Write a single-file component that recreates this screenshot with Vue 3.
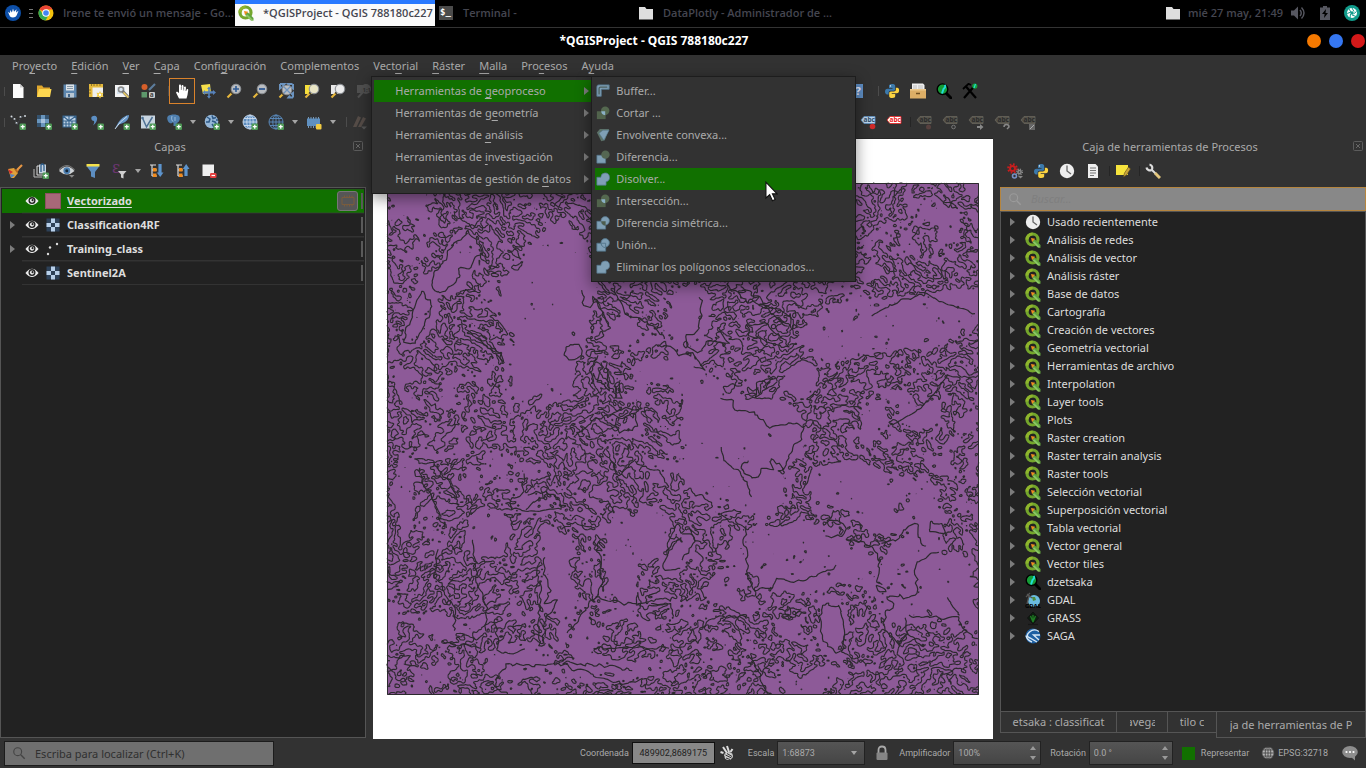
<script setup>
const plus = '<rect x="9.5" y="9.5" width="6.5" height="6.5" rx="1.2" fill="#4f9a57"/><path d="M12.75 10.7v4M10.75 12.7h4" stroke="#fff" stroke-width="1.3"/>'
const lens = (x, y) => `<path d="M${x - 3} ${y + 3}L1.5 14.5" stroke="#e6b73c" stroke-width="2.2"/><path d="M${x - 3} ${y + 3}l-1.6 1.6" stroke="#333" stroke-width="2"/><circle cx="${x}" cy="${y}" r="4.8" fill="#b9bcc0" stroke="#8b8f94"/>`
const tag = (bg, fg, edge) => `<path d="M1 6l3-3.500h11v7H4z" fill="${bg}" stroke="${edge}" stroke-width=".8"/><text x="3.500" y="8.400" font-size="6.500" font-weight="700" font-family="Noto Sans, sans-serif" fill="${fg}">abc</text>`
const python = '<path d="M8 1C5.500 1 5 2 5 3v2h3.500v.8H3.500C1.800 5.800 1 7 1 8.600S1.800 11.500 3.200 11.500H4.600V9.800C4.600 8.600 5.500 7.800 6.600 7.800h3C10.600 7.800 11.200 7 11.200 6V3C11.200 1.600 10 1 8 1z" fill="#3b79ab"/><circle cx="6.500" cy="2.900" r=".7" fill="#fff"/><path d="M8.200 15c2.500 0 3-1 3-2v-2H7.700v-.8h5c1.700 0 2.400-1.200 2.400-2.800S14.500 4.700 13.200 4.700H11.900V6.500C11.900 7.700 11 8.400 9.900 8.400h-3C5.800 8.400 5.200 9.200 5.200 10.200V13c0 1.400 1 2 3 2z" fill="#fbd341"/>'
const folder = '<path d="M1 2h6l1.500 2H15v10.500H1z" fill="#dedede"/>'
const globe = (fill, line) => `<circle cx="8" cy="8" r="7" fill="${fill}"/><g fill="none" stroke="${line}" stroke-width=".9"><circle cx="8" cy="8" r="7"/><ellipse cx="8" cy="8" rx="3.200" ry="7"/><path d="M8 1v14M1 8h14M2 4.500h12M2 11.500h12"/></g>`
const clock = '<circle cx="8" cy="8" r="7.200" fill="#eee"/><path d="M8 2.500V8l4 3" fill="none" stroke="#666" stroke-width="1.300"/>'
const geo = '#7f9fb5'
const edge = '#54768c'
const muted = '#54684f'

const icons = {
  xfce: '<circle cx="8" cy="8" r="8" fill="#0d4fa8"/><path d="M3 7l2 1 .3-3 1.600 2.500L8 3.500l1 3.300 2.500-2.500L11 7.500l2.500-1.700-1.800 4.500C10.500 12.800 7 13 5 11.500z" fill="#fff"/>',
  chrome: '<circle cx="8" cy="8" r="7.500" fill="#f4c20d"/><path d="M8 8L1.500 4.200A7.500 7.500 0 0 1 14.500 4.500H8z" fill="#ea4335"/><path d="M1.500 4.200A7.500 7.500 0 0 0 7.500 15.500L11 9.500 8 8 5 9.500z" fill="#34a853"/><circle cx="8" cy="8" r="3.800" fill="#fff"/><circle cx="8" cy="8" r="2.800" fill="#4285f4"/>',
  qgis: '<circle cx="7.500" cy="7.500" r="5.500" fill="none" stroke="#74a62c" stroke-width="3.200"/><path d="M2 7.500A5.500 5.500 0 0 1 7.500 2" fill="none" stroke="#8fb52c" stroke-width="3.200"/><path d="M7 7l3 .4L15.500 13v2.500H13L7.400 10z" fill="#5fa33b"/><path d="M9.500 9.500l6 6H13L7.400 10z" fill="#8cc665"/><path d="M6 6l4.200.7L7 10z" fill="#f28c1e"/>',
  terminal: '<rect x="1" y="1" width="14" height="14" fill="#4b4b4b"/><text x="2" y="10" font-size="9" font-weight="700" font-family="DejaVu Sans Mono, monospace" fill="#fff">$_</text>',
  folder,
  speaker: '<path d="M1 5.500h3L8 1.500v13L4 10.500H1z" fill="#565760"/><path d="M10 5q2.500 3 0 6M11.500 2.500q5 5.500 0 11" fill="none" stroke="#565760" stroke-width="1.400"/>',
  battery: '<path d="M3 2.500h3V1h4v1.500h3V15H3z" fill="#565760"/><path d="M9 4l-4 5h2.600L7 13l4-5H8.500z" fill="#000"/>',
  teal: '<circle cx="8" cy="8" r="8" fill="#119b8b"/><circle cx="8" cy="8" r="5" fill="#fff"/><circle cx="8" cy="8" r="1.700" fill="#119b8b"/><path d="M8 3l2 3.500M12.500 6.500l-3 2.500M12 11.500l-4-1.500M6 13l.5-4M3.200 8.500L7 7M5 4l2 3" stroke="#119b8b"/>',
  page: '<path d="M3 1h7l3.500 3.500V15H3z" fill="#fbfbfb"/><path d="M10 1v3.500h3.500z" fill="#c9c9c9"/>',
  open: '<path d="M1 2.500h5l1.500 2H14V14H1z" fill="#e0a82e"/><path d="M3 6h12.500L14 14H1z" fill="#fcd650"/>',
  save: '<path d="M1.500 1.500h13v13h-13z" fill="#5d86ae"/><path d="M4 1.500h8v6H4z" fill="#dfe4e8"/><path d="M5 3.500h6M5 5.500h6" stroke="#8799a8"/><path d="M4 10h8v4.500H4z" fill="#b8c6d2"/><path d="M6 11h2v3H6z" fill="#42658a"/>',
  layout: '<path d="M1 1h14v13H1z" fill="#eee"/><path d="M1 1h14v3.500H4.500V14H1z" fill="#e3b83c"/><path d="M3.500 1v2M6 1v2M9 1v2M12 1v2M1 7h2M1 10h2" stroke="#7d621b" stroke-width=".8"/><path d="M12 8l1 2 2.500-.3-1 2 1 2.200-2.500-.2-1 2-1-2-2.500.2 1-2.200-1-2 2.500.3z" fill="#f2cb42"/><circle cx="12" cy="11.700" r="1.200" fill="#fff"/>',
  layouts: '<path d="M1 2h14v12H1z" fill="#f4f4f4"/><path d="M3 4h8v7H3z" fill="#d7e4f0"/><circle cx="7" cy="6.500" r="2.500" fill="none" stroke="#888" stroke-width="1.500"/><path d="M8.500 8l6 6.500" stroke="#777" stroke-width="3"/><path d="M9.500 9.500l5 5" stroke="#f0d060" stroke-width="1.500"/>',
  style: '<circle cx="4.500" cy="4" r="3" fill="#d65f2a"/><path d="M1.500 9h5.500v5.500H1.500z" fill="#5d986b"/><path d="M9 7l6-6" stroke="#5c7c9b" stroke-width="2.200"/><rect x="9" y="9" width="6" height="6" rx="1" fill="#ccc"/><text x="9.800" y="14.200" font-size="6.500" font-weight="700" fill="#444" font-family="Noto Sans, sans-serif">a</text>',
  hand: '<path d="M5 15.500L2 9.500 3 8.500 5 10V2.500C5 1 7 1 7 2.500V7l.5-4c.2-1.500 2-1.300 2 .2V7l.5-2.700c.4-1.300 2-1 1.900.4V8l.7-1.500c.6-1 1.800-.5 1.600.7L13.500 12l-1 3.500z" fill="#fff"/><path d="M7.300 7V4M9.700 7.500V5M12 8V6.500" stroke="#555" stroke-width=".6"/>',
  pan: '<path d="M1 2l9-1 1 9-8 1z" fill="#f5de4b"/><path d="M9 3.500L11 6H9.800v2.200H13V7l3 2.500L13 12v-1.500H9.800V13H11l-2 2.800L7 13h1.200v-2.500H5V12L2.500 9.500 5 7v1.200h3.200V6H7z" fill="#5682bb"/>',
  zoomIn: lens(10, 6) + '<path d="M10 3v6M7 6h6" stroke="#2f5a93" stroke-width="1.600"/>',
  zoomOut: lens(10, 6) + '<path d="M7 6h6" stroke="#2f5a93" stroke-width="1.800"/>',
  zoomFull: '<path d="M2 1h4.500L5 3l2.500 2.500M14.500 1H10l1.500 2M15 1v4.500l-2-1.500M15 14.500v-4.500l-2 1.500M15 14.500h-4.500l1.500-2M2 1v4.500l2-1.500" stroke="#6b93bf" stroke-width="2" fill="none"/>' + lens(9, 7) + '<path d="M6 4l6 6M12 4l-6 6" stroke="#6b93bf" stroke-width="1.200"/>',
  zoomSel: '<path d="M1 2h8v9H1z" fill="#f6df3c"/>' + lens(10, 6) + '<circle cx="10" cy="6" r="4" fill="#e9e5c5"/>',
  zoomLayer: '<path d="M1 2h8v9H1z" fill="#e8e8e8"/>' + lens(10, 6) + '<circle cx="10" cy="6" r="4" fill="#ececec"/>',
  zoomNative: '<g opacity=".35"><path d="M1 2h7v8H1z" fill="#888"/><circle cx="10" cy="6" r="5" fill="#888"/><path d="M7 9l-5 5.500" stroke="#888" stroke-width="2"/></g><text x="6.500" y="8.500" font-size="6" font-weight="700" fill="#333" font-family="Noto Sans, sans-serif">1:1</text>',
  help: '<path d="M3 1h10v14H3z" fill="#5f8fc6"/><text x="5.500" y="12" font-size="11" font-weight="700" fill="#eef" font-family="Noto Sans, sans-serif">?</text>',
  python,
  drawer: '<path d="M2 .5h11L14.500 2v7H2z" fill="#efefef"/><path d="M4 2v4M6 2v4M8 3h5M8 5h5" stroke="#aaa" stroke-width=".7"/><path d="M0 6h16v9.500H0z" fill="#dcae66"/><path d="M0 6h16v1.500H0z" fill="#edc98c"/><path d="M6 10.500h4" stroke="#704f20" stroke-width="1.500"/>',
  dzetsaka: '<path d="M10 10l5 5" stroke="#000" stroke-width="3" stroke-linecap="round"/><circle cx="6.500" cy="6.200" r="5.300" fill="#159c37" stroke="#000" stroke-width="1.400"/><path d="M8.500 2q2 1.500-1 4L6 10.500" stroke="#22dcd8" stroke-width="2" fill="none"/>',
  hammers: '<path d="M2 15L12 3.500M14 15L3.500 3" stroke="#000" stroke-width="2.200"/><path d="M1 6L6.500.8 9 2" fill="none" stroke="#000" stroke-width="1.800"/><circle cx="12.800" cy="3" r="2.600" fill="#17a33c"/><path d="M13.500 1l-1.500 4" stroke="#22dcd8" stroke-width="1.200"/>',
  vector: '<g fill="#d6dbe0"><circle cx="1.500" cy="2.500" r="1"/><circle cx="4.500" cy="5" r="1"/><circle cx="6.500" cy="9" r="1"/><circle cx="10.500" cy="3" r="1"/><circle cx="15" cy="2" r="1"/></g><path d="M2 3l3 3 2 5 4-8 4-1" stroke="#567" stroke-width=".7" fill="none" stroke-dasharray="1 1.500"/>' + plus,
  raster: '<path d="M1 1h12v12H1z" fill="#6995bd"/><path d="M1 1h4v4H1zM9 1h4v4H9zM5 5h4v4H5zM1 9h4v4H1zM9 9h4v4H9z" fill="#35536f"/><path d="M5 5h4v4H5z" fill="#a9c2dc"/>' + plus,
  mesh: '<path d="M1 2h13v11H1z" fill="#bdd0e3"/><path d="M1 2h13v11H1zM1 7h13M7 2v11M1 2l6 5M7 7l7-5M7 2v5M1 10h13M4 7v6M10 7v6" fill="none" stroke="#37648e" stroke-width="1.100"/>' + plus,
  comma: '<path d="M4 2.500c3-2 6 0 5 3.500-.5 2-2 4-4 5.500 1-2 1.500-3.200 1-4.500C3.500 7 2.500 4 4 2.500z" fill="#5c8fc4"/>' + plus,
  feather: '<path d="M1 15C4 8 8 2 15 1c0 4-3 7-6 8l-4 1.500z" fill="#6596c8"/><path d="M1 15Q6 7 13 2.500" fill="none" stroke="#d8e5f2" stroke-width=".9"/>' + plus,
  virtual: '<path d="M1 1.500h14v13H1z" fill="#c8d5e0"/><path d="M2.500 4l4 9 6-10" fill="none" stroke="#4d7194" stroke-width="1.500"/><circle cx="2.500" cy="4" r="1.300" fill="#4d7194"/>' + plus,
  postgis: '<path d="M2 2c3-2 9-2 11 0 2 3 0 6-2 7L10 12H7.500V8L5 9.500C2 9 0 4 2 2z" fill="#4f7fae"/><path d="M6 2c-1 3 0 5 1.500 6M9 3v4" stroke="#a9c7e2" stroke-width=".8" fill="none"/>' + plus,
  spatialite: '<circle cx="7.500" cy="7.500" r="6.800" fill="#96b7d7"/><path d="M3 3l3 2-1 3-3 0M8 1.500l1 3 3-1M8 7l3 1 2 3-3 2-2-3M12 6l2 0" fill="none" stroke="#2e5a88" stroke-width="1.500"/>' + plus,
  wms: globe('#5b8cbf', '#cdddef') + plus,
  wfs: globe('#30363c', '#5b8cbf') + plus,
  chip: '<path d="M2.500 3v11M5 3v11M7.500 3v11M10 3v11M12.500 3v11" stroke="#8bb2d8" stroke-width=".8"/><path d="M1 4.500h13v7.500H1z" fill="#5f90c0"/><rect x="10" y="10" width="5.500" height="5.500" rx="1" fill="#f2cb42"/>',
  pencils: '<g opacity=".4"><path d="M1 13L6 2l3 1.500L4.500 13zM6 13l5-10 3 1.500L9 13z" fill="#8a7468"/><path d="M9 12.500h6l-3 3z" fill="#888"/></g>',
  tagPin: tag('#b9d4ee', '#34506b', '#5f90c0') + '<circle cx="12.500" cy="12.500" r="2.800" fill="#cf2a2a"/>',
  tagRed: tag('#fff', '#e22', '#e22'),
  tagA: tag('#55534b', '#2b2b2b', '#68655c') + '<circle cx="12.500" cy="13" r="2.500" fill="#57403e"/>',
  tagB: tag('#55534b', '#2b2b2b', '#68655c') + '<circle cx="11.500" cy="13" r="1.800" fill="none" stroke="#777"/>',
  tagC: tag('#55534b', '#2b2b2b', '#68655c') + '<path d="M9 12h3v-2l3.500 3L12 16v-2H9z" fill="#888"/>',
  tagD: tag('#55534b', '#2b2b2b', '#68655c') + '<path d="M10 13q0-2.500 2.500-2.500T15 13l-2 2" fill="none" stroke="#888" stroke-width="1.500"/>',
  tagE: tag('#55534b', '#2b2b2b', '#68655c') + '<path d="M9 10h6v6H9z" fill="#666"/><path d="M10 15l4-4" stroke="#aaa"/>',
  brush: '<path d="M1 6l6-1 4 5-4 5H4z" fill="#e0a13a"/><path d="M1 6l2 5 3-2z" fill="#cf3030"/><path d="M3 11l1 4 4-3z" fill="#4f82c4"/><path d="M7 6l3 4 2-3z" fill="#b96b20"/><path d="M10 7l5-5" stroke="#e59645" stroke-width="2.200"/>',
  addGroup: '<path d="M4 3h8v9H4z" fill="#333" stroke="#ddd"/><path d="M6 1.500h7v9H6z" fill="#c8d4df"/><path d="M1 6v8h8" fill="none" stroke="#bbb"/><path d="M8 9V3q0-2 1.500-2T11 3v5" fill="none" stroke="#2e5f8e" stroke-width="1.300"/>' + plus,
  eyeBlue: '<path d="M0 8q8-9 15.500 0Q8 15 0 8z" fill="#cfd3d6"/><circle cx="7.800" cy="7.700" r="3.400" fill="#4c7eb0"/><circle cx="7.800" cy="7.700" r="1.500" fill="#17293a"/><path d="M0 7q8-9 15.500 0" fill="none" stroke="#777" stroke-width="1.200"/><path d="M10 12h5.500l-2.700 2.700z" fill="#888"/>',
  eye: '<path d="M.5 8q7.500-10 15 0-7.500 9-15 0z" fill="#eee"/><circle cx="8" cy="7.500" r="4" fill="#222"/><circle cx="8" cy="7.500" r="2.400" fill="#eee"/><circle cx="8.600" cy="7" r="1.200" fill="#222"/>',
  funnel: '<path d="M1.500 3h13L10 9v6l-4-1.500V9z" fill="#5d8ec1"/><path d="M1.500 1h13v2.500h-13z" fill="#f5e14b"/>',
  epsilon: '<text x="1" y="10" font-size="16" font-family="DejaVu Serif, serif" fill="#6e3673">ε</text><path d="M7 8h8.500l-3 3.500v4l-2.500-1v-3z" fill="#cfcfcf"/>',
  expand: '<path d="M1 2h6M3 2v11M3 7h5M3 13h5" stroke="#ddd" stroke-width="1.200" fill="none"/><path d="M4 5h3.500v3.500H4zM4 10.500h3.500V14H4z" fill="#f08a1d"/><path d="M11 1v10" stroke="#5d94cd" stroke-width="3.200"/><path d="M7.800 9.500h6.700L11.200 14z" fill="#5d94cd"/>',
  collapse: '<path d="M1 2h6M3 2v11M3 7h5M3 13h5" stroke="#ddd" stroke-width="1.200" fill="none"/><path d="M4 5h3.500v3.500H4zM4 10.500h3.500V14H4z" fill="#f08a1d"/><path d="M11 13V5" stroke="#5d94cd" stroke-width="3.200"/><path d="M7.800 6h6.700L11.200 1z" fill="#5d94cd"/>',
  removeLayer: '<path d="M1.500 1.500h11.500v11.500H1.500z" fill="#efefef"/><rect x="9" y="10" width="6.500" height="5" rx="1.200" fill="#e33c3c"/><path d="M10.500 12.500h3.500" stroke="#fff" stroke-width="1.200"/>',
  grid: '<path d="M1.500 1.500h13v13h-13z" fill="#2d4158"/><path d="M6 1.500h4V6H6zM1.500 6H6v4H1.500zM10 6h4.500v4H10zM6 10h4v4.500H6z" fill="#b7cfe9"/>',
  points: '<g fill="#ddd"><circle cx="3" cy="13" r="1.200"/><circle cx="5" cy="6.500" r="1.200"/><circle cx="12" cy="3" r="1.200"/></g>',
  gears: '<g fill="none" stroke="#c81e1e"><circle cx="5.500" cy="5.500" r="2.500" stroke-width="2"/><circle cx="5.500" cy="5.500" r="4.300" stroke-width="2" stroke-dasharray="1.700 1.670"/></g><g fill="none" stroke="#8b8b8b"><circle cx="12.500" cy="9" r="1.600" stroke-width="1.500"/><circle cx="12.500" cy="9" r="2.800" stroke-width="1.500" stroke-dasharray="1.100 1.100"/></g><circle cx="7.500" cy="13" r="2" fill="none" stroke="#7890c4" stroke-width="1.600"/><path d="M11 13h5l-2.500 2.500z" fill="#888"/>',
  clock,
  doc: '<path d="M3 1h7.500L13 3.500V15H3z" fill="#eee"/><path d="M5 5h6M5 7.500h6M5 10h6M5 12.500h4" stroke="#777" stroke-width="1.100"/>',
  note: '<path d="M1 2h12v10H1z" fill="#f7e43d"/><path d="M8.500 14l1-4L13.500 4 15.500 6l-4 6z" fill="#c9a43a" stroke="#5c4c1b" stroke-width=".6"/>',
  wrench: '<path d="M1.500 4.500a3.500 3.500 0 0 0 5 2.500M4.500 1.500a3.500 3.500 0 0 1 2.300 5.300" fill="none" stroke="#ddd" stroke-width="2.200"/><path d="M6.500 6.500l4 4" stroke="#ddd" stroke-width="2"/><path d="M10 10l5 5" stroke="#e3c67d" stroke-width="3"/>',
  gdal: '<circle cx="9" cy="9" r="6" fill="#6bbce0"/><path d="M7 5l3 0 1 3-3 1z" fill="#4e8b3d"/><path d="M1 5l4-4M2 2l5 4M4 4l-2 8" stroke="#555" stroke-width="1.300"/><text x="0" y="15.500" font-size="6" font-weight="700" fill="#000" font-family="Noto Sans, sans-serif">GDAL</text>',
  grass: '<path d="M8 2l5.500 6L8 14 2.500 8z" fill="#0d1f10" stroke="#111"/><path d="M8 12L5.500 6M8 12V5M8 12l2.500-6" stroke="#1f7d24" stroke-width="1.300"/><path d="M3 14.500h10" stroke="#161616" stroke-width="1.200"/>',
  saga: '<circle cx="8" cy="8" r="7.500" fill="#1d5fa2"/><path d="M14 3.500Q9 0 4.500 4T5 10l7 4M15 7H8.500l5.500 5M1 7.500Q2 12 7 14" stroke="#d6e7f5" stroke-width="1.400" fill="none"/>',
  buffer: `<path d="M1 14V3q0-2 2-2h12v5H7q-1 0-1 1v7z" fill="${geo}" stroke="${edge}"/><path d="M3.500 12V5q0-1.500 1.500-1.500h8" fill="none" stroke="#4c5f5c" stroke-width="1.500"/>`,
  clip: `<path d="M1 6h10v9H1z" fill="${muted}" opacity=".9"/><circle cx="10.500" cy="5.500" r="4.800" fill="${muted}"/><path d="M6 6h4.500v4.500Q6 10 6 6z" fill="#8bb0c6"/>`,
  hull: `<path d="M1 5l3.500-4H15L10 14l-4 1z" fill="#5c7268"/><path d="M3.500 6L8 2.500h7L9 14z" fill="${geo}" stroke="${edge}" stroke-width=".6"/>`,
  difference: `<path d="M1 6h10v9H1z" fill="${geo}" stroke="${edge}" stroke-width=".8"/><circle cx="10.800" cy="5.300" r="4.800" fill="#546652"/>`,
  dissolve: `<path d="M1 6h4.500a5 5 0 1 1 6 5v4H1z" fill="${geo}" stroke="${edge}" stroke-width=".8"/>`,
  symdiff: `<path d="M1 6h10v9H1z" fill="${geo}" stroke="${edge}" stroke-width=".8"/><circle cx="10.500" cy="5.500" r="4.800" fill="${geo}" stroke="${edge}" stroke-width=".8"/><path d="M6 6h5v5Q6 10.500 6 6z" fill="#4d5d4e"/>`,
  union: `<path d="M1 6h10v9H1z" fill="${geo}" stroke="${edge}"/><circle cx="10.500" cy="5.500" r="4.800" fill="${geo}" stroke="${edge}"/><path d="M6 6h5v5Q6 10.500 6 6z" fill="${geo}" stroke="${edge}"/>`,
  tracker: '<path d="M4 2l4 6M8 1l2 6M1.500 7l3 1M13.500 4l-2 3" stroke="#ddd" stroke-width="2"/><ellipse cx="9.500" cy="11" rx="4.500" ry="4" fill="#ccc"/><path d="M6.500 10l6 3M8 8.500l5 3M2 12l4 0M7 13l4 1.500" stroke="#333"/>',
  lock: '<path d="M4.500 8V5q0-3.500 3.500-3.500T11.500 5v3" fill="none" stroke="#a9a9a9" stroke-width="1.800"/><rect x="2.500" y="7.500" width="11" height="7.500" rx="1" fill="#858585"/>',
  globe: globe('#b5b5b5', '#3c3c3c'),
  bubble: '<ellipse cx="8" cy="7" rx="7.800" ry="6" fill="#8d8d8d"/><path d="M9 12l4 3.500V10z" fill="#8d8d8d"/><g fill="#fff"><circle cx="4.500" cy="7" r="1.100"/><circle cx="8" cy="7" r="1.100"/><circle cx="11.500" cy="7" r="1.100"/></g>',
  search: '<circle cx="6.500" cy="6.500" r="4.500" fill="none" stroke="#9b9b9b" stroke-width="1.300"/><path d="M10 10l4.500 4.500" stroke="#9b9b9b" stroke-width="1.600"/>',
  searchDark: '<circle cx="6.500" cy="6.500" r="4.500" fill="none" stroke="#444" stroke-width="1.300"/><path d="M10 10l4.500 4.500" stroke="#444" stroke-width="1.600"/>',
  close: '<rect x="3.500" y="2.500" width="9" height="9" rx="1" fill="none" stroke="#5c5c5c"/><path d="M6 5l4 4M10 5l-4 4" stroke="#666"/>',
  memory: '<path d="M2 4.500h12v7H2z" fill="none" stroke="#7a5c3c"/><path d="M4.500 2.500v2M7 2.500v2M9.500 2.500v2M12 2.500v2M4.500 11.500v2M7 11.500v2M9.500 11.500v2M12 11.500v2" stroke="#7a5c3c"/>',
}

const tasks = [
  { icon: 'chrome', text: 'Irene te envió un mensaje - Go…' },
  { icon: 'qgis', text: '*QGISProject - QGIS 788180c227', active: true },
  { icon: 'terminal', text: 'Terminal -' },
  { icon: 'folder', text: 'DataPlotly - Administrador de …' },
]
const menus = [
  ['Pro', 'y', 'ecto'], ['', 'E', 'dición'], ['', 'V', 'er'], ['', 'C', 'apa'], ['Confi', 'g', 'uración'],
  ['Co', 'm', 'plementos'], ['Vect', 'o', 'rial'], ['', 'R', 'áster'], ['', 'M', 'alla'], ['Pro', 'c', 'esos'], ['A', 'y', 'uda'],
]
const vectorMenu = [
  ['Herramientas de ', 'g', 'eoproceso'], ['Herramientas de g', 'e', 'ometría'], ['Herramientas de ', 'a', 'nálisis'],
  ['Herramientas de ', 'i', 'nvestigación'], ['Herramientas de gestión de ', 'd', 'atos'],
]
const geoMenu = [
  ['buffer', 'Buffer...'], ['clip', 'Cortar ...'], ['hull', 'Envolvente convexa...'], ['difference', 'Diferencia...'],
  ['dissolve', 'Disolver...'], ['clip', 'Intersección...'], ['symdiff', 'Diferencia simétrica...'], ['union', 'Unión...'],
  ['dissolve', 'Eliminar los polígonos seleccionados...'],
]
const bar1 = ['page', 'open', 'save', 'layout', 'layouts', 'style', '|', 'hand', 'pan', 'zoomIn', 'zoomOut', 'zoomFull', 'zoomSel', 'zoomLayer', 'zoomNative']
const bar1b = ['help', '|', 'python', 'drawer', 'dzetsaka', 'hammers']
const bar2 = ['vector', 'raster', 'mesh', 'comma', 'feather', 'virtual', 'postgis', 'v', 'spatialite', 'v', 'wms', 'wfs', 'v', 'chip', 'v', '|', 'pencils']
const bar2b = ['tagPin', 'tagRed', '|', 'tagA', 'tagB', 'tagC', 'tagD', 'tagE']
const layerBar = ['brush', 'addGroup', 'eyeBlue', 'funnel', 'epsilon', 'v', 'expand', 'collapse', 'removeLayer']
const toolBar = ['gears', 'python', 'clock', 'doc', '|', 'note', '|', 'wrench']
const layers = [
  { name: 'Vectorizado', icon: '', selected: true },
  { name: 'Classification4RF', icon: 'grid', group: true },
  { name: 'Training_class', icon: 'points', group: true },
  { name: 'Sentinel2A', icon: 'grid' },
]
const tools = [
  ['clock', 'Usado recientemente'],
  ...['Análisis de redes', 'Análisis de vector', 'Análisis ráster', 'Base de datos', 'Cartografía', 'Creación de vectores',
    'Geometría vectorial', 'Herramientas de archivo', 'Interpolation', 'Layer tools', 'Plots', 'Raster creation',
    'Raster terrain analysis', 'Raster tools', 'Selección vectorial', 'Superposición vectorial', 'Tabla vectorial',
    'Vector general', 'Vector tiles'].map((t) => ['qgis', t]),
  ['dzetsaka', 'dzetsaka'], ['gdal', 'GDAL'], ['grass', 'GRASS'], ['saga', 'SAGA'],
]
const tabs = [['etsaka : classificat', 'w1'], ['avega', 'w2'], ['tilo c', 'w3'], ['ja de herramientas de P', 'w4']]

/* Parcel outlines: contour lines of a noise field, damped where the large parcels lie. */
const W = 592
const H = 512
const hash = (x, y, s) => {
  let h = (x * 374761393 + y * 668265263 + s * 974634777) | 0
  h = Math.imul(h ^ (h >>> 13), 1274126177)
  h = Math.imul(h ^ (h >>> 15), 2246822519)
  return ((h ^ (h >>> 16)) >>> 0) / 4294967295
}
const noise = (x, y, s) => {
  const xi = Math.floor(x), yi = Math.floor(y)
  const u = x - xi, v = y - yi
  const a = u * u * (3 - 2 * u), b = v * v * (3 - 2 * v)
  const t = hash(xi, yi, s) * (1 - a) + hash(xi + 1, yi, s) * a
  const w = hash(xi, yi + 1, s) * (1 - a) + hash(xi + 1, yi + 1, s) * a
  return t * (1 - b) + w * b
}
const calm = [
  [165, 120, 42, 78, 8], [158, 190, 26, 30, 0], [500, 142, 98, 28, -10], [360, 252, 62, 40, 8], [408, 372, 70, 32, 6],
  [524, 385, 26, 62, 8], [445, 443, 13, 28, 0], [72, 74, 18, 22, 30], [54, 98, 14, 18, 20], [32, 140, 12, 34, 22],
  [235, 375, 18, 50, 0], [300, 135, 26, 26, 0], [310, 215, 18, 40, -12], [340, 300, 50, 22, 20], [470, 308, 48, 24, 8],
  [560, 405, 28, 32, 0], [130, 475, 36, 14, 0], [60, 440, 44, 9, 0], [170, 395, 16, 44, 0],
  [265, 345, 16, 24, 10], [100, 350, 24, 22, 0], [294, 368, 12, 22, 25], [505, 340, 36, 9, 0],
  [20, 310, 12, 40, 0], [130, 110, 12, 22, 0], [410, 195, 18, 14, 0], [235, 480, 30, 9, 0],
].map(([x, y, rx, ry, a]) => [x, y, rx, ry, Math.cos(a * Math.PI / 180), Math.sin(a * Math.PI / 180)])
const field = (x, y) => {
  const wx = x + 18 * (noise(x / 26, y / 26, 5) - 0.5)
  const wy = y + 18 * (noise(x / 26, y / 26, 6) - 0.5)
  const dir = noise(x / 90, y / 90, 9)
  const p = dir > 0.5 ? wx + wy * 0.7 : wx - wy * 0.5
  const q = dir > 0.5 ? wy - wx * 0.7 : wy + wx * 0.5
  const n = 0.6 * noise(p / 5.4, q / 3.4, 1) + 0.4 * noise(x / 2.3, y / 2.3, 2)
  const m = 0.4 * (noise(x / 48, y / 48, 3) - 0.5) + 0.5 * (noise(wx / 15, wy / 15, 4) - 0.5)
  let c = 0
  for (const [cx, cy, rx, ry, co, si] of calm) {
    const dx = wx - cx, dy = wy - cy
    const ex = (dx * co + dy * si) / rx, ey = (dy * co - dx * si) / ry
    c = Math.max(c, Math.min(1, (1.2 - ex * ex - ey * ey) * 4))
  }
  return n - 0.51 - Math.max(-0.02, m) * 1.1 - c * 0.34
}
const contours = () => {
  const s = 1.2
  const nx = Math.floor(W / s), ny = Math.floor(H / s)
  const g = []
  for (let j = 0; j <= ny; j++) {
    const r = new Float32Array(nx + 1)
    for (let i = 0; i <= nx; i++) r[i] = field(i * s, j * s)
    g.push(r)
  }
  const out = []
  for (let j = 0; j < ny; j++) {
    for (let i = 0; i < nx; i++) {
      const a = g[j][i], b = g[j][i + 1], c = g[j + 1][i + 1], d = g[j + 1][i]
      const pts = []
      if (a > 0 !== b > 0) pts.push([i + a / (a - b), j])
      if (b > 0 !== c > 0) pts.push([i + 1, j + b / (b - c)])
      if (c > 0 !== d > 0) pts.push([i + d / (d - c), j + 1])
      if (d > 0 !== a > 0) pts.push([i, j + a / (a - d)])
      for (let k = 0; k + 1 < pts.length; k += 2) {
        out.push(`M${(pts[k][0] * s).toFixed(1)} ${(pts[k][1] * s).toFixed(1)}L${(pts[k + 1][0] * s).toFixed(1)} ${(pts[k + 1][1] * s).toFixed(1)}`)
      }
    }
  }
  return out.join('')
}
const contourPath = contours()

/* Long boundaries, given as rough polylines and roughened to a natural edge. */
const roughen = (d) => d.split('M').filter(Boolean).map((part) => {
  const n = part.match(/-?\d+/g).map(Number)
  const pts = []
  for (let i = 0; i + 1 < n.length; i += 2) pts.push([n[i], n[i + 1]])
  if (/z/i.test(part)) pts.push(pts[0])
  const out = []
  for (let i = 0; i + 1 < pts.length; i++) {
    const [x1, y1] = pts[i], [x2, y2] = pts[i + 1]
    const steps = Math.max(1, Math.round(Math.hypot(x2 - x1, y2 - y1) / 7))
    for (let k = 0; k <= steps; k++) {
      const x = x1 + (x2 - x1) * k / steps, y = y1 + (y2 - y1) * k / steps
      out.push(`${(x + 14 * (noise(x / 13, y / 13, 21) - 0.5)).toFixed(1)} ${(y + 14 * (noise(x / 13, y / 13, 22) - 0.5)).toFixed(1)}`)
    }
  }
  return 'M' + out.join('L')
}).join('')
const parcels = [
  ['translate(-7 -2) scale(.3333)', 'M205 205L225 185 245 182 268 150 300 190 303 220 285 232 265 262 240 262 235 290 208 325 180 336 155 315 165 270 190 245 205 235zM130 332L158 380 135 435 105 490 75 485 85 430 110 360zM555 495L570 487 597 495 603 512 590 530 570 532 555 525zM290 470L330 500 370 545 360 520 330 480M655 525L630 570 640 600M665 540L655 600 685 625 680 540M705 605L720 600 722 650 706 655zM710 715L765 700 775 735 715 755zM605 330L610 370 630 375 640 350 690 440M700 320L740 400 800 420 855 475M830 495L870 500 900 520M580 770L640 720 700 690 790 680'],
  ['translate(293 98) scale(.3333)', 'M60 50L65 80 60 130 50 155 22 165 28 200 55 215 80 185 150 180 130 160 110 140M200 130L250 125 300 165 330 200 280 190 210 165zM140 10L200 60 290 80 345 120 340 145 290 110M180 20L240 50 260 80 320 140M570 105L630 70 700 45 740 40 800 70 890 95M0 220L40 215 75 265 40 260M120 355L160 360 165 385 220 395 265 440 290 432 350 430 370 440 368 475 340 500 310 560 300 555 275 530 275 560 240 565 235 585 215 595 180 570 190 545 205 542M120 500L130 535 190 590 220 650M225 310L275 290 260 320 230 350zM800 280L780 320 720 390 630 430'],
  ['translate(-7 268) scale(.3333)', 'M120 55L130 100 160 150 195 230M160 45L210 90 230 140M430 70L432 120 390 145 392 170 430 177 540 175 540 150 500 122 440 130M440 170L500 130M480 335L470 370 482 420 475 585 490 585 495 510 530 450 495 460M495 320L490 370 512 415 495 460M280 270L290 400 320 470 318 540M170 300L165 370 220 470 225 540M645 275L660 320 665 400 640 440M690 20L715 80 735 55 770 25M900 255L865 290 845 350 900 355M345 510L355 600 400 610 440 595M340 690L380 640 480 645 540 635 600 660 740 700 790 680M560 545L600 500 640 440 740 460 800 450M550 635L640 640 760 660M180 575L300 590M640 590L870 590M815 460L870 460 880 500'],
  ['translate(293 318) scale(.3333)', 'M0 95L30 95 43 120 35 140 0 180M200 75L195 120 198 180 210 240 230 265 270 260 290 235 340 243 400 225 450 210 470 195M425 310L420 350 428 410 445 440 470 450 490 440 490 360 478 315zM440 70L470 55 495 65 490 100 440 110M610 125L650 120 690 75 712 65 718 120 740 140M780 155L740 165 708 185 712 270 690 290 655 285 620 285 640 320 615 335 610 380 655 430 680 400 740 435M500 120L570 130 600 170 590 240 605 250M750 60L790 70 795 100 755 95zM590 255L615 262 612 275 595 268zM680 350L680 400M690 345L830 350 860 390 893 410M320 325L360 325 345 350 322 345zM800 290L840 340M60 380L110 350 200 345M210 470L240 520 260 580'],
].map(([t, d]) => [t, roughen(d)])
</script>

<template>
  <div class="desk">
    <header class="taskbar">
      <button class="plain" aria-label="Menú de aplicaciones"><svg class="i16" viewBox="0 0 16 16" v-html="icons.xfce" /></button>
      <span class="grip"><i /><i /><i /></span>
      <button v-for="t in tasks" :key="t.text" class="task" :class="{ active: t.active }">
        <svg class="i16" viewBox="0 0 16 16" v-html="icons[t.icon]" /><span>{{ t.text }}</span>
      </button>
      <div class="tray">
        <svg class="i16" viewBox="0 0 16 16" v-html="icons.folder" />
        <time>mié 27 may, 21:49</time>
        <svg class="i16" viewBox="0 0 16 16" v-html="icons.speaker" />
        <svg class="i16 gap" viewBox="0 0 16 16" v-html="icons.battery" />
        <svg class="i16 gap" viewBox="0 0 16 16" v-html="icons.teal" />
      </div>
    </header>

    <div class="titlebar">
      <h1>*QGISProject - QGIS 788180c227</h1>
      <div class="winbtns">
        <button class="orange" aria-label="Minimizar" /><button class="blue" aria-label="Maximizar" /><button class="red" aria-label="Cerrar" />
      </div>
    </div>

    <nav class="menubar">
      <div v-for="(m, i) in menus" :key="i" class="menu">
        <button class="plain">{{ m[0] }}<u>{{ m[1] }}</u>{{ m[2] }}</button>
        <div v-if="i === 6" class="popup first">
          <button v-for="(v, k) in vectorMenu" :key="k" class="entry" :class="{ on: k === 0 }">
            <span>{{ v[0] }}<u>{{ v[1] }}</u>{{ v[2] }}</span><i class="tri" />
          </button>
          <div class="popup second">
            <button v-for="(g, k) in geoMenu" :key="k" class="entry" :class="{ on: k === 4 }">
              <svg class="i14" viewBox="0 0 16 16" v-html="icons[g[0]]" /><span>{{ g[1] }}</span>
            </button>
            <svg class="pointer" viewBox="0 0 14 22"><path d="M1 1v17l4-3.500 3 6.500 3-1.500-3-6H13z" fill="#fff" stroke="#111" stroke-width="1.200" /></svg>
          </div>
        </div>
      </div>
    </nav>

    <div class="toolbar top">
      <i class="handle" />
      <template v-for="(n, k) in bar1" :key="k">
        <i v-if="n === '|'" class="sep wide" />
        <button v-else class="tool" :class="{ picked: n === 'hand' }" :aria-label="n"><svg class="i16" viewBox="0 0 16 16" v-html="icons[n]" /></button>
      </template>
      <span class="space1" />
      <template v-for="(n, k) in bar1b" :key="k">
        <i v-if="n === '|'" class="sep wide" />
        <button v-else class="tool" :aria-label="n"><svg class="i16" viewBox="0 0 16 16" v-html="icons[n]" /></button>
      </template>
    </div>
    <div class="toolbar">
      <i class="handle" />
      <template v-for="(n, k) in bar2" :key="k">
        <i v-if="n === '|'" class="sep wide" />
        <i v-else-if="n === 'v'" class="drop" />
        <button v-else class="tool" :aria-label="n"><svg class="i16" viewBox="0 0 16 16" v-html="icons[n]" /></button>
      </template>
      <span class="space2" />
      <template v-for="(n, k) in bar2b" :key="k">
        <i v-if="n === '|'" class="sep" />
        <button v-else class="tool" :aria-label="n"><svg class="i16" viewBox="0 0 16 16" v-html="icons[n]" /></button>
      </template>
    </div>

    <main>
      <section class="dock">
        <div class="docktitle"><h2>Capas</h2><button class="plain" aria-label="Cerrar panel"><svg class="i16" viewBox="0 0 16 16" v-html="icons.close" /></button></div>
        <div class="dockbar">
          <template v-for="(n, k) in layerBar" :key="k">
            <i v-if="n === 'v'" class="drop" />
            <button v-else class="tool" :aria-label="n"><svg class="i16" viewBox="0 0 16 16" v-html="icons[n]" /></button>
          </template>
        </div>
        <ul class="layers">
          <li v-for="l in layers" :key="l.name" :class="{ sel: l.selected }">
            <span class="twist"><i v-if="l.group" class="tri" /></span>
            <div class="layer">
              <svg class="i14" viewBox="0 0 16 16" v-html="icons.eye" />
              <i v-if="l.selected" class="swatch" />
              <svg v-else class="i16" viewBox="0 0 16 16" v-html="icons[l.icon]" />
              <b>{{ l.name }}</b>
              <span class="end">
                <button v-if="l.selected" class="mem" aria-label="Capa temporal"><svg class="i16" viewBox="0 0 16 16" v-html="icons.memory" /></button>
                <i class="mark" />
              </span>
            </div>
          </li>
        </ul>
      </section>

      <section class="map">
        <svg viewBox="0 0 620 600">
          <g transform="translate(14 44)">
            <rect width="592" height="512" fill="#8d5a98" />
            <g fill="none" stroke="#2c2a2e" stroke-linejoin="round">
              <path :d="contourPath" stroke-width="1.2" />
              <path v-for="(p, k) in parcels" :key="k" :transform="p[0]" :d="p[1]" stroke-width="3.600" />
              <rect x=".5" y=".5" width="591" height="511" />
            </g>
          </g>
        </svg>
      </section>

      <section class="dock">
        <div class="docktitle"><h2>Caja de herramientas de Procesos</h2><button class="plain" aria-label="Cerrar panel"><svg class="i16" viewBox="0 0 16 16" v-html="icons.close" /></button></div>
        <div class="dockbar">
          <template v-for="(n, k) in toolBar" :key="k">
            <i v-if="n === '|'" class="sep" />
            <button v-else class="tool" :aria-label="n"><svg class="i16" viewBox="0 0 16 16" v-html="icons[n]" /></button>
          </template>
        </div>
        <label class="find"><svg class="i14" viewBox="0 0 16 16" v-html="icons.search" /><input type="text" placeholder="Buscar…" aria-label="Buscar"></label>
        <ul class="tools">
          <li v-for="t in tools" :key="t[1]"><i class="tri" /><svg class="i16" viewBox="0 0 16 16" v-html="icons[t[0]]" /><span>{{ t[1] }}</span></li>
        </ul>
        <div class="tabs">
          <button v-for="(t, k) in tabs" :key="k" :class="[t[1], { cur: k === 3 }]"><span>{{ t[0] }}</span></button>
        </div>
      </section>
    </main>

    <footer class="status">
      <label class="locator"><svg class="i14" viewBox="0 0 16 16" v-html="icons.searchDark" /><input type="text" placeholder="Escriba para localizar (Ctrl+K)" aria-label="Localizar"></label>
      <label class="field coord"><span>Coordenada</span><input type="text" value="489902,8689175"></label>
      <button class="plain track" aria-label="Extensión"><svg class="i16" viewBox="0 0 16 16" v-html="icons.tracker" /></button>
      <label class="field"><span>Escala</span><span class="box"><select><option>1:68873</option></select><i class="drop" /></span></label>
      <button class="plain" aria-label="Bloquear escala"><svg class="i16" viewBox="0 0 16 16" v-html="icons.lock" /></button>
      <label class="field"><span>Amplificador</span><span class="box"><input type="text" value="100%"><span class="spin"><i class="up" /><i class="down" /></span></span></label>
      <label class="field"><span>Rotación</span><span class="box rot"><input type="text" value="0.0 °"><span class="spin"><i class="up" /><i class="down" /></span></span></label>
      <label class="field"><input type="checkbox" checked><span>Representar</span></label>
      <button class="plain epsg"><svg class="i14" viewBox="0 0 16 16" v-html="icons.globe" />EPSG:32718</button>
      <button class="plain" aria-label="Mensajes"><svg class="i16" viewBox="0 0 16 16" v-html="icons.bubble" /></button>
    </footer>
  </div>
</template>

<style>
body { margin: 0; background: #323232; }
</style>

<style scoped>
* { box-sizing: border-box; }
.desk { display: flex; flex-direction: column; height: 100vh; overflow: hidden; background: #323232; color: #aaa; font: 11px/16px "Noto Sans", sans-serif; }
button, input, select { font: inherit; color: inherit; border: 0; background: none; padding: 0; margin: 0; outline: 0; }
svg { display: block; flex: none; }
ul { list-style: none; margin: 0; padding: 0; }
h1, h2 { margin: 0; font-size: inherit; }
u { text-underline-offset: 3px; }
.i16 { width: 16px; height: 16px; }
.i14 { width: 14px; height: 14px; }
.plain { display: flex; align-items: center; }

.taskbar { display: flex; align-items: center; height: 28px; padding: 0 6px 1px 5px; background: #000; border-bottom: 1px solid #333; color: #454650; font: 600 11px/16px "Open Sans", "Noto Sans", sans-serif; flex: none; }
.grip { width: 14px; display: flex; flex-direction: column; gap: 3px; align-items: flex-end; padding-right: 2px; }
.grip i { width: 4px; height: 1px; background: #777; }
.task { display: flex; align-items: center; gap: 9px; width: 200px; height: 26px; padding: 0 0 0 3px; white-space: nowrap; }
.task.active { background: #fafafa; border-top: 4px solid #2979ff; padding-bottom: 4px; }
.tray { margin-left: auto; display: flex; align-items: center; gap: 7px; }
.tray .gap { margin-left: 4px; }

.titlebar { position: relative; display: flex; justify-content: center; align-items: center; height: 27px; background: #000; flex: none; padding-bottom: 1px; }
.titlebar h1 { color: #fff; padding-right: 58px; font-size: 12px; }
.winbtns { position: absolute; right: 1px; display: flex; gap: 8px; }
.winbtns button { width: 14px; height: 14px; border-radius: 50%; }
.orange { background: #f57900; }
.blue { background: #3577f2; }
.red { background: #d41919; }

.menubar { display: flex; height: 21px; padding-left: 5px; flex: none; }
.menu { position: relative; padding: 0 7px; display: flex; white-space: nowrap; }
.menu > button { display: inline-block; }
.popup { position: absolute; top: 21px; left: 5px; z-index: 5; padding: 3px 3px 3px 2px; background: #323232; border: 1px solid #1d1d1d; box-shadow: 0 4px 14px rgba(0, 0, 0, .45); }
.popup.first { width: 221px; padding-right: 0; }
.popup.second { top: -1px; left: 219px; width: 265px; padding-left: 3px; }
.entry { display: flex; align-items: center; width: 100%; height: 22px; gap: 6px; white-space: nowrap; }
.entry.on { background: #117000; }
.first > .entry { padding-left: 21px; }
.first > .entry .tri { margin-left: auto; margin-right: 2px; }
.second > .entry { padding-left: 1px; }
.pointer { position: absolute; left: 173px; top: 104px; width: 13px; height: 21px; }

.tri { width: 0; height: 0; flex: none; border-left: 5px solid #7c7c7c; border-top: 4px solid transparent; border-bottom: 4px solid transparent; }
.toolbar { display: flex; align-items: center; height: 32px; flex: none; }
.toolbar.top { height: 30px; }
.handle { width: 1px; height: 9px; background: #4c4c4c; margin: 0 0 0 4px; }
.tool { width: 26px; height: 26px; display: flex; align-items: center; justify-content: center; flex: none; }
.tool.picked { outline: 1px solid #d9822b; outline-offset: -1px; }
.sep { width: 4px; height: 10px; border-right: 1px solid #252525; flex: none; }
.sep.wide { width: 8px; border-right-color: #4c4c4c; }
.drop { width: 12px; flex: none; height: 4px; display: flex; justify-content: center; }
.drop::after { content: ""; border-top: 4px solid #a5a5a5; border-left: 3px solid transparent; border-right: 3px solid transparent; width: 0; }
.space1 { width: 468px; flex: none; }
.space2 { width: 482px; flex: none; }

main { flex: 1; display: flex; gap: 7px; min-height: 0; }
.dock { width: 366px; flex: none; display: flex; flex-direction: column; }
.docktitle { display: flex; align-items: flex-end; height: 17px; flex: none; }
.docktitle h2 { flex: 1; text-align: center; font-weight: 400; padding-right: 10px; }
.dockbar { display: flex; align-items: center; height: 32px; padding-left: 2px; flex: none; }
.layers { flex: 1; background: #222; border: 1px solid #555; padding: 1px; }
.layers li { display: flex; height: 24px; }
.layers .sel { background: #117000; }
.twist { width: 20px; display: flex; align-items: center; justify-content: center; }
.layer { flex: 1; display: flex; align-items: center; gap: 6px; padding: 0 1px 0 3px; border-top: 1px solid #2a2a2a; border-bottom: 1px solid #333; color: #ddd; }
.sel .layer { border-color: #1f5f14; }
.sel b { text-decoration: underline; text-underline-offset: 2px; }
.swatch { width: 16px; height: 16px; background: #a76878; border: 1px solid #8c5260; }
.end { margin-left: auto; display: flex; align-items: center; gap: 3px; }
.mem { width: 21px; height: 20px; background: #565656; border: 1px solid #777; border-radius: 3px; display: flex; align-items: center; justify-content: center; }
.mark { width: 2px; height: 16px; background: #5a5a5a; }

.map { flex: 1; min-width: 0; background: #fff; overflow: hidden; border-top: 1px solid #282828; margin-bottom: -1px; }
.map svg { width: 100%; height: 100%; }

.find { display: flex; align-items: center; gap: 9px; height: 24px; padding-left: 7px; background: #888; border: 1px solid #b5853f; flex: none; }
.find input { flex: 1; font-style: italic; }
.find input::placeholder { color: #7f7f7f; opacity: 1; }
.tools { flex: 1; background: #222; border: 1px solid #555; padding-top: 1px; color: #ddd; }
.tools li { display: flex; align-items: center; height: 18px; padding-left: 9px; }
.tools svg { margin: 0 6px 0 10px; }
.tabs { display: flex; align-items: flex-start; height: 26px; flex: none; }
.tabs button { height: 21px; border: 1px solid #555; border-width: 0 0 1px 1px; display: flex; align-items: center; justify-content: center; }
.tabs span { overflow: hidden; white-space: nowrap; display: flex; justify-content: center; }
.tabs .w1 { width: 116px; }
.tabs .w2 { width: 51px; }
.w2 span { width: 25px; }
.tabs .w3 { width: 49px; }
.w3 span { width: 24px; }
.tabs .w4 { flex: 1; }
.tabs .cur { height: 26px; border-right-width: 1px; }

.status { display: flex; align-items: center; height: 30px; padding: 0 8px 0 4px; gap: 9px; flex: none; font-family: Roboto, "Noto Sans", sans-serif; font-size: 9px; }
.locator { display: flex; align-items: center; gap: 9px; width: 270px; height: 25px; padding: 0 7px; background: #6f6f6f; border: 1px solid #1c1c1c; margin-right: auto; font: 11px "Noto Sans", sans-serif; }
.locator input { flex: 1; }
.locator input::placeholder { color: #303030; opacity: 1; }
.field { display: flex; align-items: center; gap: 3px; white-space: nowrap; }
.coord > input { width: 83px; height: 22px; background: #888; border: 1px solid #111; color: #222; text-align: center; }
.track { margin: 0 4px 0 -5px; }
.box { display: flex; align-items: center; width: 88px; height: 24px; padding: 0 4px; background: linear-gradient(#555, #454545); border: 1px solid #222; }
.box input, .box select { flex: 1; min-width: 0; appearance: none; }
.rot { width: 84px; }
.spin { display: flex; flex-direction: column; gap: 6px; }
.up, .down { width: 0; border: 3px solid transparent; border-top-width: 0; border-bottom: 4px solid #999; }
.down { border-bottom: 0; border-top: 4px solid #999; }
.field input[type="checkbox"] { appearance: none; width: 13px; height: 13px; background: #117000; margin-right: 3px; }
.epsg { gap: 3px; margin: 0 5px 0 3px; }
</style>
